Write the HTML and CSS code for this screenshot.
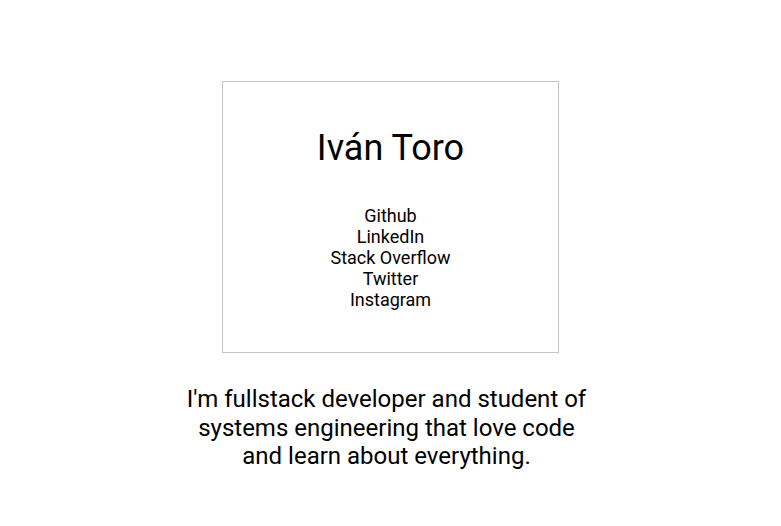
FILE: index.html
```html
<!DOCTYPE html>
<html lang="es">
<head>
<meta charset="utf-8">
<title>Iván Toro</title>
<link rel="stylesheet" href="styles.css">
</head>
<body>
<main class="page">
  <section class="card">
    <h1 class="name">Iván Toro</h1>
    <ul class="links">
      <li><a href="#">Github</a></li>
      <li><a href="#">LinkedIn</a></li>
      <li><a href="#">Stack Overflow</a></li>
      <li><a href="#">Twitter</a></li>
      <li><a href="#">Instagram</a></li>
    </ul>
  </section>
  <p class="bio">I'm fullstack developer and student of systems engineering that love code and learn about everything.</p>
</main>
</body>
</html>
```
FILE: styles.css
```css
html, body {
  margin: 0;
  padding: 0;
  background: #fff;
}
body {
  font-family: Roboto, "Liberation Sans", sans-serif;
  color: #000;
}
.page {
  display: flex;
  flex-direction: column;
  align-items: center;
  padding-top: 81px;
}
.card {
  box-sizing: border-box;
  width: 337px;
  height: 272px;
  border: 1px solid #c4c4c4;
  display: flex;
  flex-direction: column;
  align-items: center;
  padding-top: 45px;
}
.name {
  margin: 0;
  font-size: 36px;
  font-weight: 400;
  line-height: 42px;
}
.links {
  list-style: none;
  margin: 36px 0 0;
  padding: 0;
  text-align: center;
  font-size: 18px;
  line-height: 21px;
}
.links a {
  color: #000;
  text-decoration: none;
}
.bio {
  margin: 32px 0 0;
  box-sizing: border-box;
  width: 428px;
  padding-right: 8px;
  text-align: center;
  font-size: 24px;
  line-height: 28.5px;
}
```
